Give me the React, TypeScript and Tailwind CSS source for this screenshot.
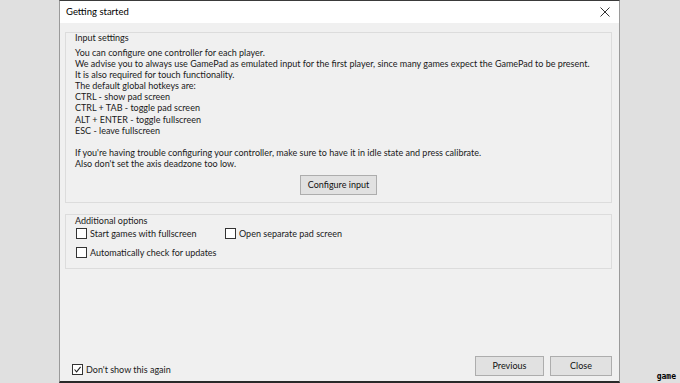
import React, { useState } from "react";

const font = { fontFamily: 'Lato, "Noto Sans", sans-serif' };

type CheckProps = {
  label: string;
  checked?: boolean;
  onToggle?: () => void;
};

const Check: React.FC<CheckProps> = ({ label, checked, onToggle }) => (
  <label className="flex items-center gap-[3px] cursor-default leading-[11px]" onClick={onToggle}>
    <span className="w-[11px] h-[11px] border border-[#333] bg-white flex items-center justify-center">
      {checked && (
        <svg width="9" height="9" viewBox="0 0 9 9">
          <path d="M1.5 4.5 L3.6 6.8 L7.6 1.8" fill="none" stroke="#222" strokeWidth="1.1" />
        </svg>
      )}
    </span>
    <span>{label}</span>
  </label>
);

const Button: React.FC<{ label: string; className?: string }> = ({ label, className }) => (
  <button
    className={`h-[20px] bg-[#e1e1e1] border border-[#adadad] text-[#111] flex items-center justify-center ${className ?? ""}`}
  >
    {label}
  </button>
);

const App: React.FC = () => {
  const [fullscreen, setFullscreen] = useState(false);
  const [separatePad, setSeparatePad] = useState(false);
  const [updates, setUpdates] = useState(false);
  const [dontShow, setDontShow] = useState(true);

  return (
    <div className="w-[680px] h-[383px] bg-[#e0e0e0] relative overflow-hidden text-[9px] text-[#1a1a1a]" style={font}>
      <div className="ml-[59px] w-[561px] h-[383px] flex flex-col border-x border-[#9a9a9a] border-t border-t-[#3a3a3a] border-b-2 border-b-[#2a2a2a] bg-[#f0f0f0]">
        {/* title bar */}
        <div className="h-[22px] bg-white flex items-center justify-between pl-[6px] pr-[9px]">
          <span className="text-[9.5px] text-black">Getting started</span>
          <svg width="10" height="10" viewBox="0 0 10 10">
            <path d="M0.5 0.5 L9.5 9.5 M9.5 0.5 L0.5 9.5" stroke="#333" strokeWidth="1" />
          </svg>
        </div>

        <div className="flex-1 flex flex-col pl-[5px] pr-[7px] pt-[9px] pb-[6px]">
          {/* input settings */}
          <div className="h-[171px] border border-[#dcdcdc] flex flex-col px-[9px] leading-[11.1px]">
            <div className="h-[13px] leading-[9px]">Input settings</div>
            <div className="pt-[1px]">
              <div>You can configure one controller for each player.</div>
              <div>We advise you to always use GamePad as emulated input for the first player, since many games expect the GamePad to be present.</div>
              <div>It is also required for touch functionality.</div>
              <div>The default global hotkeys are:</div>
              <div>CTRL - show pad screen</div>
              <div>CTRL + TAB - toggle pad screen</div>
              <div>ALT + ENTER - toggle fullscreen</div>
              <div>ESC - leave fullscreen</div>
              <div className="h-[11.1px]" />
              <div>If you&apos;re having trouble configuring your controller, make sure to have it in idle state and press calibrate.</div>
              <div>Also don&apos;t set the axis deadzone too low.</div>
            </div>
            <div className="flex justify-center pt-[6px]">
              <Button label="Configure input" className="w-[77px]" />
            </div>
          </div>

          {/* additional options */}
          <div className="mt-[11px] h-[55px] border border-[#dcdcdc] px-[9px] flex flex-col">
            <div className="h-[11px] leading-[10px] pt-[1px]">Additional options</div>
            <div className="flex pt-[2px] pl-[1px]">
              <div className="w-[149px]">
                <Check label="Start games with fullscreen" checked={fullscreen} onToggle={() => setFullscreen(!fullscreen)} />
              </div>
              <Check label="Open separate pad screen" checked={separatePad} onToggle={() => setSeparatePad(!separatePad)} />
            </div>
            <div className="pt-[8px] pl-[1px]">
              <Check label="Automatically check for updates" checked={updates} onToggle={() => setUpdates(!updates)} />
            </div>
          </div>

          {/* footer */}
          <div className="mt-auto flex items-end justify-between">
            <div className="pl-[7px]">
              <Check label="Don't show this again" checked={dontShow} onToggle={() => setDontShow(!dontShow)} />
            </div>
            <div className="flex gap-[6px] -mb-[1px]">
              <Button label="Previous" className="w-[69px]" />
              <Button label="Close" className="w-[62px]" />
            </div>
          </div>
        </div>
      </div>
      <span className="absolute right-[4px] bottom-[2px] text-[8px] font-bold leading-none text-black" style={{ fontFamily: '"DejaVu Sans Mono", monospace' }}>
        game
      </span>
    </div>
  );
};

export default App;
